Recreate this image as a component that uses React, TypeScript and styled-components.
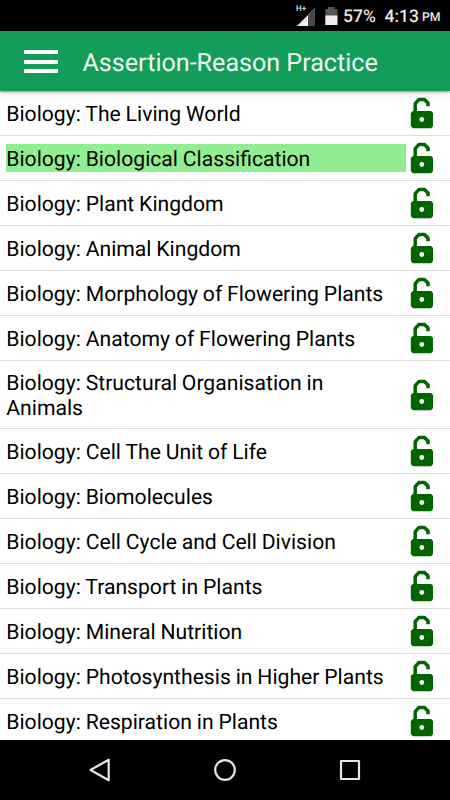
import React from "react";
import styled, { createGlobalStyle } from "styled-components";

const GlobalStyle = createGlobalStyle`
  * { box-sizing: border-box; }
  html, body { margin: 0; padding: 0; background: #fff; }
  body {
    font-family: Roboto, "Liberation Sans", sans-serif;
    text-rendering: geometricPrecision;
    overflow: hidden;
  }
`;

const Screen = styled.div`
  width: 450px;
  height: 800px;
  display: flex;
  flex-direction: column;
  overflow: hidden;
  background: #fff;
`;

const StatusBar = styled.div`
  flex: 0 0 31px;
  height: 31px;
  display: flex;
  align-items: center;
  padding: 2px 0 0 296px;
  background: #000;
  color: #e6e6e6;
  font-weight: 500;
  font-size: 18px;
  line-height: 27px;
  white-space: pre;
`;

const StatusIcon = styled.svg`
  display: block;
  flex: none;
`;

const Network = styled.div`
  display: grid;
  flex: 0 0 29px;
  height: 27px;

  > * { grid-area: 1 / 1; }
  > svg { margin: 5px 0 0 1px; }
`;

const NetworkType = styled.span`
  font-size: 8px;
  line-height: 12px;
`;

const BatteryIcon = styled(StatusIcon)`
  margin-bottom: 2px;
`;

const Battery = styled.span`
  flex: 0 0 41.5px;
  margin-left: 5px;
  padding-top: 2px;
  font-size: 17.5px;
`;

const Clock = styled.span`
  flex: 0 0 37.5px;
  padding-top: 2px;
  font-size: 17.5px;
`;

const Meridiem = styled.span`
  padding-top: 4px;
  font-size: 12.3px;
`;

const AppBar = styled.header`
  flex: 0 0 60px;
  position: relative;
  z-index: 1;
  display: flex;
  align-items: center;
  gap: 24.5px;
  padding: 1px 24px 0;
  background: #129d59;
  box-shadow: 0 1px 2px rgba(0, 0, 0, 0.4), 0 3px 8px rgba(0, 0, 0, 0.1);
`;

const MenuButton = styled.button`
  display: flex;
  flex-direction: column;
  gap: 5.5px;
  width: 34px;
  padding: 0;
  border: 0;
  background: none;
`;

const MenuLine = styled.span`
  height: 4px;
  background: #fff;
`;

const Title = styled.h1`
  margin: 0;
  padding-top: 4px;
  color: #f2faf5;
  font-size: 25.1px;
  font-weight: 400;
  line-height: 30px;
  white-space: nowrap;
`;

const List = styled.main`
  flex: 1;
  overflow: hidden;
`;

const Row = styled.div<{ $tall?: boolean }>`
  display: flex;
  align-items: center;
  height: ${(p) => (p.$tall ? 67.5 : 45.05)}px;
  padding: 0 16px 0 6px;
  border-bottom: 1.5px solid #dedede;
`;

const Label = styled.span<{ $selected?: boolean }>`
  width: 400px;
  margin-right: 4px;
  padding: 3px 4px 0 0.3px;
  background: ${(p) => (p.$selected ? "#90ee90" : "transparent")};
  color: #000;
  font-size: 21.15px;
  word-spacing: -0.4px;
  line-height: 25px;
`;

const Bottom = styled.nav`
  flex: 0 0 60px;
  display: flex;
  justify-content: center;
  align-items: center;
  gap: 101px;
  background: #000;
`;

const topics = [
  "The Living World",
  "Biological Classification",
  "Plant Kingdom",
  "Animal Kingdom",
  "Morphology of Flowering Plants",
  "Anatomy of Flowering Plants",
  "Structural Organisation in Animals",
  "Cell The Unit of Life",
  "Biomolecules",
  "Cell Cycle and Cell Division",
  "Transport in Plants",
  "Mineral Nutrition",
  "Photosynthesis in Higher Plants",
  "Respiration in Plants",
];

const OpenLock = () => (
  <StatusIcon width="24" height="34" viewBox="0 0 24 34">
    <path d="M5.2 17V7.7L9 3.4H14.4L18 7V10.2" fill="none" stroke="#006400" strokeWidth="3.5" strokeLinejoin="round" />
    <path d="M2.8 15H21.2L23 17V30L21.2 32.3H2.8L0.8 30V17Z" fill="#006400" />
    <circle cx="11.8" cy="23.5" r="2.4" fill="#fff" />
  </StatusIcon>
);

export default function App() {
  return (
    <Screen>
      <GlobalStyle />
      <StatusBar>
        <Network>
          <StatusIcon width="18" height="18" viewBox="0 0 18 18">
            <path d="M0 18L18 0V18Z" fill="#eee" />
            <path d="M11 7L18 0V18H11Z" fill="#484848" />
          </StatusIcon>
          <NetworkType>H+</NetworkType>
        </Network>
        <BatteryIcon width="13" height="18" viewBox="0 0 13 18">
          <path d="M0.3 2H3V0H9.5V2H12.5V9H0.3Z" fill="#555" />
          <path d="M0.3 8.5H12.5V18H0.3Z" fill="#eee" />
        </BatteryIcon>
        <Battery>57%</Battery>
        <Clock>4:13</Clock>
        <Meridiem>PM</Meridiem>
      </StatusBar>
      <AppBar>
        <MenuButton aria-label="Menu">
          <MenuLine />
          <MenuLine />
          <MenuLine />
        </MenuButton>
        <Title>Assertion-Reason Practice</Title>
      </AppBar>
      <List>
        {topics.map((topic, i) => (
          <Row key={topic} $tall={i === 6}>
            <Label $selected={i === 1}>Biology: {topic}</Label>
            <OpenLock />
          </Row>
        ))}
      </List>
      <Bottom>
        <StatusIcon width="24" height="26" viewBox="0 0 24 26">
          <path d="M2.5 13L20.7 2.7V23.3Z" fill="none" stroke="#e6e6e6" strokeWidth="2.2" strokeLinejoin="round" />
        </StatusIcon>
        <StatusIcon width="24" height="26" viewBox="0 0 24 26">
          <circle cx="12" cy="13" r="9.8" fill="none" stroke="#e6e6e6" strokeWidth="2.2" />
        </StatusIcon>
        <StatusIcon width="24" height="26" viewBox="0 0 24 26">
          <rect x="3" y="4" width="18" height="18" fill="none" stroke="#e6e6e6" strokeWidth="2.2" strokeLinejoin="round" />
        </StatusIcon>
      </Bottom>
    </Screen>
  );
}
